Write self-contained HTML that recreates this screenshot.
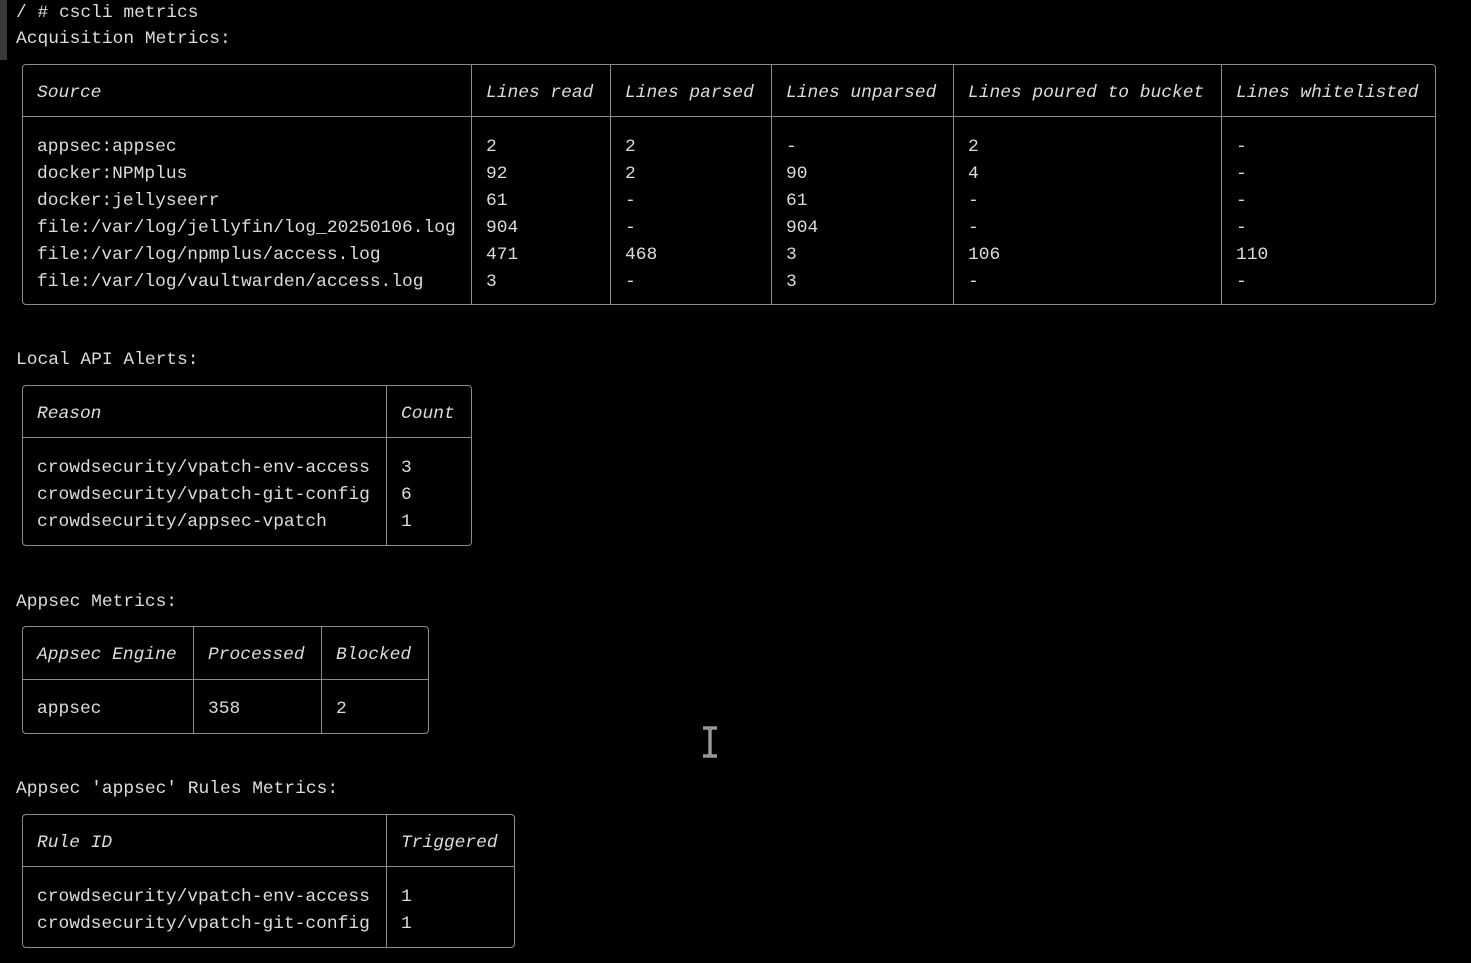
<!DOCTYPE html>
<html><head><meta charset="utf-8"><style>
html,body{margin:0;padding:0;background:#000;width:1471px;height:963px;overflow:hidden;position:relative}
.t{position:absolute;font-family:"Liberation Mono","DejaVu Sans Mono",monospace;font-size:17.9px;line-height:26px;color:#dcdcdc;white-space:pre;margin-top:2px}
.i{font-style:italic}
.b{position:absolute;border:1.5px solid #8a8a8a;border-radius:4px;box-sizing:border-box}
.h{position:absolute;height:0;border-top:1.5px solid #8a8a8a}
.v{position:absolute;width:0;border-left:1.5px solid #8a8a8a}
</style></head><body>
<div style="position:absolute;left:0;top:0;width:7px;height:60px;background:#3a3a3a"></div>
<div class="t" style="left:16px;top:-2px">/ # cscli metrics</div>
<div class="t" style="left:16px;top:24px">Acquisition Metrics:</div>

<div class="b" style="left:22px;top:64px;width:1414px;height:241px"></div>
<div class="h" style="left:22px;top:116px;width:1414px"></div>
<div class="v" style="left:471px;top:64px;height:241px"></div>
<div class="v" style="left:610px;top:64px;height:241px"></div>
<div class="v" style="left:771px;top:64px;height:241px"></div>
<div class="v" style="left:953px;top:64px;height:241px"></div>
<div class="v" style="left:1221px;top:64px;height:241px"></div>
<div class="t i" style="left:37px;top:78px">Source</div>
<div class="t i" style="left:486px;top:78px">Lines read</div>
<div class="t i" style="left:625px;top:78px">Lines parsed</div>
<div class="t i" style="left:786px;top:78px">Lines unparsed</div>
<div class="t i" style="left:968px;top:78px">Lines poured to bucket</div>
<div class="t i" style="left:1236px;top:78px">Lines whitelisted</div>
<div class="t" style="left:37px;top:132px;line-height:27px">appsec:appsec
docker:NPMplus
docker:jellyseerr
file:/var/log/jellyfin/log_20250106.log
file:/var/log/npmplus/access.log
file:/var/log/vaultwarden/access.log</div>
<div class="t" style="left:486px;top:132px;line-height:27px">2
92
61
904
471
3</div>
<div class="t" style="left:625px;top:132px;line-height:27px">2
2
-
-
468
-</div>
<div class="t" style="left:786px;top:132px;line-height:27px">-
90
61
904
3
3</div>
<div class="t" style="left:968px;top:132px;line-height:27px">2
4
-
-
106
-</div>
<div class="t" style="left:1236px;top:132px;line-height:27px">-
-
-
-
110
-</div>

<div class="t" style="left:16px;top:345px">Local API Alerts:</div>
<div class="b" style="left:22px;top:385px;width:450px;height:161px"></div>
<div class="h" style="left:22px;top:437px;width:450px"></div>
<div class="v" style="left:386px;top:385px;height:161px"></div>
<div class="t i" style="left:37px;top:399px">Reason</div>
<div class="t i" style="left:401px;top:399px">Count</div>
<div class="t" style="left:37px;top:453px;line-height:27px">crowdsecurity/vpatch-env-access
crowdsecurity/vpatch-git-config
crowdsecurity/appsec-vpatch</div>
<div class="t" style="left:401px;top:453px;line-height:27px">3
6
1</div>

<div class="t" style="left:16px;top:587px">Appsec Metrics:</div>
<div class="b" style="left:22px;top:626px;width:407px;height:108px"></div>
<div class="h" style="left:22px;top:679px;width:407px"></div>
<div class="v" style="left:193px;top:626px;height:108px"></div>
<div class="v" style="left:321px;top:626px;height:108px"></div>
<div class="t i" style="left:37px;top:640px">Appsec Engine</div>
<div class="t i" style="left:208px;top:640px">Processed</div>
<div class="t i" style="left:336px;top:640px">Blocked</div>
<div class="t" style="left:37px;top:694px">appsec</div>
<div class="t" style="left:208px;top:694px">358</div>
<div class="t" style="left:336px;top:694px">2</div>

<svg style="position:absolute;left:700px;top:726px" width="20" height="32" viewBox="0 0 20 32"><path d="M3 2h14M3 30h14M10 2v28" stroke="#ddd" stroke-width="3" fill="none"/><path d="M3 2h14M3 30h14M10 2v28" stroke="#555" stroke-width="1" fill="none"/></svg>

<div class="t" style="left:16px;top:774px">Appsec 'appsec' Rules Metrics:</div>
<div class="b" style="left:22px;top:814px;width:493px;height:134px"></div>
<div class="h" style="left:22px;top:866px;width:493px"></div>
<div class="v" style="left:386px;top:814px;height:134px"></div>
<div class="t i" style="left:37px;top:828px">Rule ID</div>
<div class="t i" style="left:401px;top:828px">Triggered</div>
<div class="t" style="left:37px;top:882px;line-height:27px">crowdsecurity/vpatch-env-access
crowdsecurity/vpatch-git-config</div>
<div class="t" style="left:401px;top:882px;line-height:27px">1
1</div>
</body></html>
